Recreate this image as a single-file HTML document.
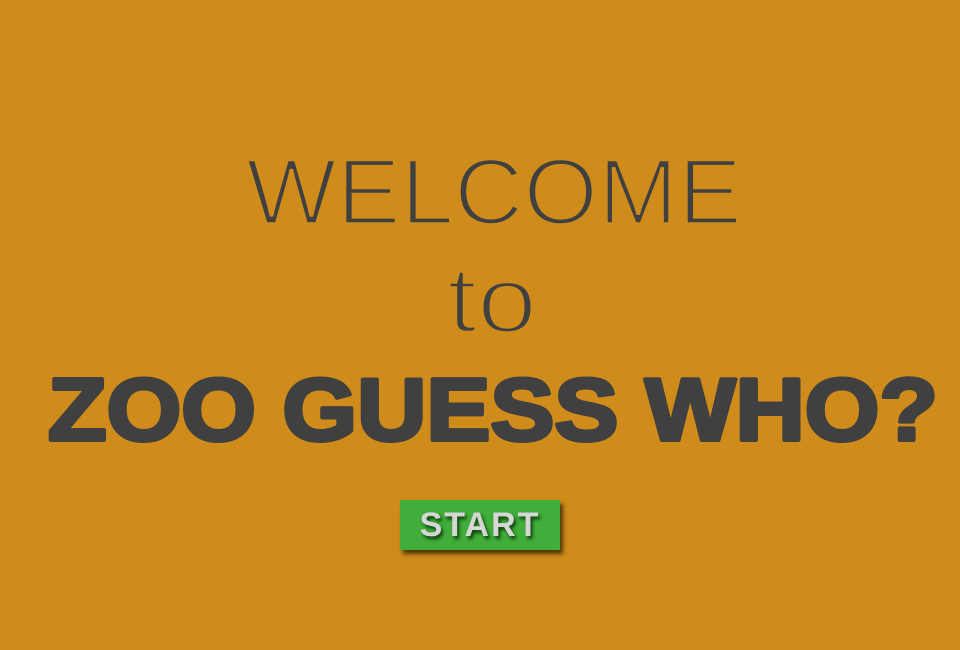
<!DOCTYPE html>
<html><head><meta charset="utf-8"><style>
html,body{margin:0;padding:0;background:#CF8C1B;width:960px;height:650px;overflow:hidden}
svg{position:absolute;left:0;top:0}
.btn{position:absolute;left:400px;top:500px;width:160px;height:50px;background:#41AD3A;box-shadow:3px 4px 4px rgba(40,25,0,0.75)}
.btn span{position:absolute;left:0;right:0;top:6px;text-align:center;font:bold 34px "Liberation Sans",sans-serif;color:#d6d6d6;letter-spacing:2px;text-shadow:2px 3px 3px rgba(0,40,0,0.8)}
</style></head><body>
<svg width="960" height="650" viewBox="0 0 960 650">
<g stroke="#CF8C1B" stroke-width="3.5" fill="#404040" font-family="Liberation Sans, sans-serif" font-size="94">
<text x="246" y="224" textLength="496" lengthAdjust="spacingAndGlyphs">WELCOME</text>
<text x="447" y="332" textLength="90" lengthAdjust="spacingAndGlyphs">to</text>
</g>
<text x="48" y="440" font-family="Liberation Sans, sans-serif" font-weight="bold" font-size="88" fill="#404040" stroke="#404040" stroke-width="4" stroke-linejoin="round" textLength="890" lengthAdjust="spacingAndGlyphs">ZOO GUESS WHO?</text>
</svg>
<div class="btn"><span>START</span></div>
</body></html>
